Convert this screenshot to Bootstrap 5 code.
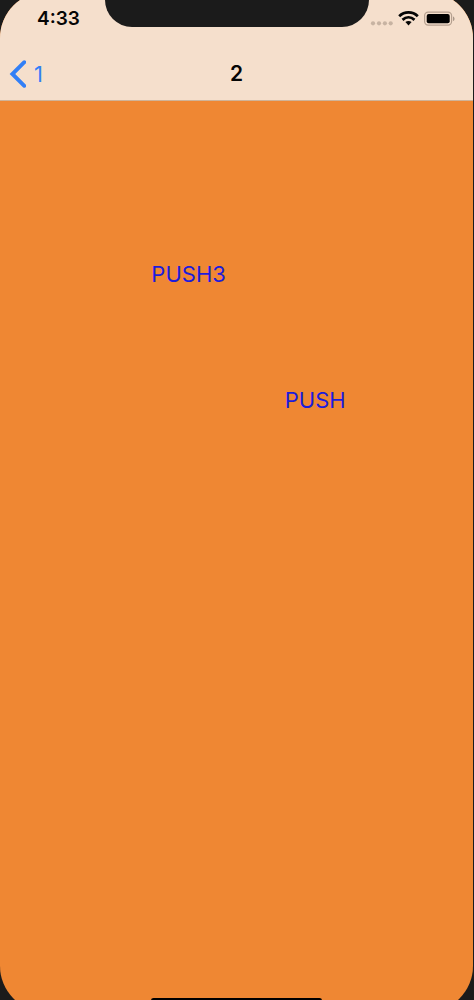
<!DOCTYPE html>
<html lang="en">
<head>
<meta charset="utf-8">
<meta name="viewport" content="width=device-width, initial-scale=1">
<title>2</title>
<link href="https://cdn.jsdelivr.net/npm/bootstrap@5.3.0/dist/css/bootstrap.min.css" rel="stylesheet">
<style>
  body { background: #1b1b1b; font-family: Inter, "Liberation Sans", sans-serif; color: #050505; }
  .device { padding-right: 1px; }
  .screen { background: #ef8733; border-radius: 46px; margin: -8px 0 -12px; }
  .top-area { background: #f5dfcc; border-bottom: 1px solid #cfb398; padding-top: 8px; }
  .notch { width: 264px; height: 27px; background: #1b1b1b; border-radius: 0 0 28px 28px; }
  .status-row { height: 46px; padding: 8px 18px 0 37px; }
  .clock { font-size: 19px; line-height: 22px; font-weight: 600; }
  .nav-row { height: 54px; padding: 2px 8px 0; }
  .back-link { color: #327ff6; font-size: 22px; line-height: 28px; gap: 8px; }
  .screen-title { font-size: 21px; line-height: 28px; font-weight: 600; }
  .content { padding-top: 157px; }
  .push-btn { color: #1c1cdc; font-size: 22px; line-height: 32px; border: 0; padding: 0; }
  .push-btn:hover { color: #1212a8; }
  .push-three { margin-left: 32%; }
  .push-plain { margin-left: 60.2%; margin-top: 94px; }
  .home-bar { width: 36%; height: 5px; background: #000; margin-bottom: 9px; }
</style>
</head>
<body>
<div class="device d-flex min-vh-100 overflow-hidden">
  <div class="screen position-relative flex-grow-1 d-flex flex-column overflow-hidden">
    <header class="top-area position-relative">
      <div class="notch position-absolute start-50 translate-middle-x" aria-hidden="true"></div>
      <div class="status-row d-flex justify-content-between align-items-start">
        <time class="clock">4:33</time>
        <svg width="86" height="22" viewBox="0 0 86 22" role="img" aria-label="No signal, Wi-Fi on, battery full">
          <g fill="#c7b3a2"><circle cx="4" cy="15.3" r="2.1"/><circle cx="10" cy="15.3" r="2.1"/><circle cx="15.9" cy="15.3" r="2.1"/><circle cx="21.7" cy="15.3" r="2.1"/></g>
          <g fill="none" stroke="#050505" stroke-width="2.8">
            <path d="M30.2 8.2C35.5 3.1 43.5 3.1 48.8 8.2"/>
            <path d="M33.5 11.9C37.2 8.5 41.8 8.5 45.5 11.9"/>
          </g>
          <path d="M36.4 14.1c1.8-1.6 4.4-1.6 6.2 0l-3.1 3.3z" fill="#050505"/>
          <rect x="55.6" y="4.1" width="27" height="13" rx="3.6" fill="none" stroke="#b5a08f" stroke-width="1.2"/>
          <rect x="57.7" y="6" width="23" height="9.3" rx="2" fill="#000"/>
          <path d="M84 8.4c2 .7 2 3.9 0 4.6z" fill="#a89788"/>
        </svg>
      </div>
      <nav class="nav-row row g-0 align-items-center" aria-label="Navigation bar">
        <div class="col d-flex">
          <a href="#" class="back-link d-flex align-items-center text-decoration-none">
            <svg width="18" height="28" viewBox="0 0 18 28" aria-hidden="true"><path d="M16.3 2.2L4.4 14l11.9 11.8" fill="none" stroke="currentColor" stroke-width="3.9" stroke-linecap="round" stroke-linejoin="miter"/></svg>
            <span>1</span>
          </a>
        </div>
        <h1 class="screen-title col-auto mb-0">2</h1>
        <div class="col"></div>
      </nav>
    </header>
    <main class="content flex-grow-1 d-flex flex-column align-items-start">
      <button type="button" class="btn push-btn push-three">PUSH3</button>
      <button type="button" class="btn push-btn push-plain">PUSH</button>
    </main>
    <div class="home-bar rounded-pill mx-auto" aria-hidden="true"></div>
  </div>
</div>
<script src="https://cdn.jsdelivr.net/npm/bootstrap@5.3.0/dist/js/bootstrap.bundle.min.js"></script>
</body>
</html>
